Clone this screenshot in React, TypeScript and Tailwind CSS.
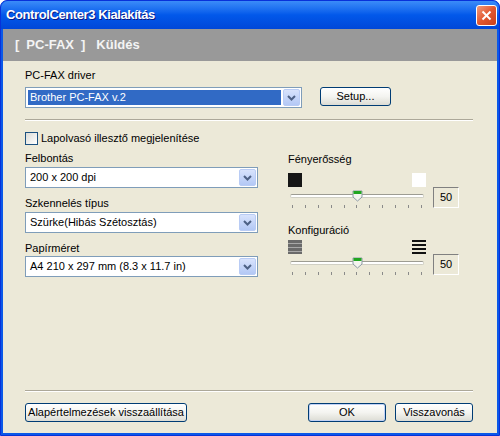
import React from "react";

const font = { fontFamily: '"Liberation Sans", "DejaVu Sans", sans-serif' };

function Combo({ value, width, selected }: { value: string; width: string; selected?: boolean }) {
  return (
    <div className={`${width} h-[21px] flex border border-[#7F9DB9] bg-white`}>
      <div className="flex-1 flex items-center p-[2px]">
        <div
          className={`w-full h-full flex items-center pl-[2px] text-[11px] whitespace-nowrap ${
            selected ? "bg-[#316AC5] text-white" : "text-black"
          }`}
        >
          {value}
        </div>
      </div>
      <div className="w-[17px] m-[1px] ml-0 rounded-[2px] border border-[#B9CCF5] bg-gradient-to-b from-[#D8E3FC] to-[#B3C8F5] flex items-center justify-center">
        <svg width="9" height="6" viewBox="0 0 9 6">
          <polyline points="1,1 4.5,4.5 8,1" fill="none" stroke="#4D6185" strokeWidth="2" />
        </svg>
      </div>
    </div>
  );
}

function XpButton({ label, width, isDefault }: { label: string; width: string; isDefault?: boolean }) {
  return (
    <div
      className={`${width} h-[19px] rounded-[3px] border border-[#003C74] bg-gradient-to-b from-[#FFFFFF] via-[#F4F4F0] to-[#DCDCD4] flex items-center justify-center text-[11px] text-black whitespace-nowrap ${
        isDefault ? "shadow-[inset_0_0_0_1px_#C2D2F5]" : ""
      }`}
    >
      {label}
    </div>
  );
}

function Thumb() {
  return (
    <svg width="11" height="12" viewBox="0 0 11 12">
      <path d="M1 1 H10 V7 L5.5 11 L1 7 Z" fill="#F4F4EE" stroke="#8C9AA5" strokeWidth="1" />
      <rect x="1.5" y="1" width="8" height="3" fill="#21A621" />
    </svg>
  );
}

function Slider({ top }: { top: React.ReactNode }) {
  return (
    <div className="flex items-end">
      <div className="w-[138px] flex flex-col">
        <div className="flex justify-between h-[14px]">{top}</div>
        <div className="relative h-[14px] mt-[2px]">
          <div className="absolute left-[2px] right-[2px] top-[5px] h-[4px] rounded-[2px] bg-white border border-[#D0CFC4] border-t-[#9D9C93]" />
          <div className="absolute left-[64px] top-[1px]">
            <Thumb />
          </div>
        </div>
        <div className="flex justify-between px-[4px] h-[6px] mt-[2px]">
          {Array.from({ length: 11 }).map((_, i) => (
            <div key={i} className="w-[1px] h-[3px] bg-[#8A8A8A]" />
          ))}
        </div>
      </div>
      <div className="ml-[7px] mb-[3px] w-[26px] h-[21px] border border-t-[#808080] border-l-[#808080] border-b-white border-r-white flex items-center justify-center text-[11px] text-black">
        50
      </div>
    </div>
  );
}

export default function App() {
  return (
    <div className="w-[500px] h-[436px] bg-white" style={font}>
      <div className="w-[500px] h-[436px] flex flex-col rounded-t-[7px] bg-[#0A58E8] border border-[#0831D9]">
        {/* Title bar */}
        <div className="h-[28px] flex items-center justify-between pl-[5px] pr-[2px] rounded-t-[7px] bg-gradient-to-b from-[#3B8CF8] via-[#0258EA] to-[#0047D8]">
          <span className="text-white text-[13px] font-bold [text-shadow:1px_1px_0_#0A1883] tracking-[-0.4px]">
            ControlCenter3 Kialakítás
          </span>
          <div className="w-[21px] h-[21px] rounded-[3px] border border-white bg-gradient-to-br from-[#F09A7A] via-[#E2572F] to-[#C9401B] flex items-center justify-center">
            <svg width="11" height="11" viewBox="0 0 11 11">
              <line x1="1.5" y1="1.5" x2="9.5" y2="9.5" stroke="white" strokeWidth="2" />
              <line x1="9.5" y1="1.5" x2="1.5" y2="9.5" stroke="white" strokeWidth="2" />
            </svg>
          </div>
        </div>
        {/* Client area */}
        <div className="flex-1 flex flex-col mx-[2px] mb-[2px] bg-[#ECE9D8]">
          <div className="h-[32px] bg-[#999999] flex items-center pl-[12px] text-[13px] font-bold text-[#F4F4F4]">
            <span>[</span>
            <span className="ml-[7px]">PC-FAX</span>
            <span className="ml-[7px]">]</span>
            <span className="ml-[11px]">Küldés</span>
          </div>
          <div className="flex-1 flex flex-col pl-[22px] pr-[24px] text-[11px] text-black">
            <div className="mt-[8px] h-[13px] leading-[13px]">PC-FAX driver</div>
            <div className="mt-[5px] flex items-start">
              <Combo value="Brother PC-FAX v.2" width="w-[277px]" selected />
              <div className="ml-[18px]">
                <XpButton label="Setup..." width="w-[71px]" />
              </div>
            </div>
            <div className="mt-[11px] h-[2px] border-t border-[#ACA899] border-b border-b-white" />
            <div className="mt-[11px] flex items-center h-[13px]">
              <div className="w-[13px] h-[13px] border border-[#1C5180] bg-gradient-to-br from-[#DCDCD7] to-[#FFFFFF]" />
              <span className="ml-[3px]">Lapolvasó illesztő megjelenítése</span>
            </div>
            <div className="flex mt-[6px]">
              <div className="w-[233px] flex flex-col">
                <div className="h-[13px] leading-[13px] mt-[1px]">Felbontás</div>
                <div className="mt-[2px]">
                  <Combo value="200 x 200 dpi" width="w-[233px]" />
                </div>
                <div className="h-[13px] leading-[13px] mt-[9px]">Szkennelés típus</div>
                <div className="mt-[2px]">
                  <Combo value="Szürke(Hibás Szétosztás)" width="w-[233px]" />
                </div>
                <div className="h-[13px] leading-[13px] mt-[9px]">Papírméret</div>
                <div className="mt-[1px]">
                  <Combo value="A4 210 x 297 mm (8.3 x 11.7 in)" width="w-[233px]" />
                </div>
              </div>
              <div className="ml-[30px] flex flex-col">
                <div className="h-[13px] leading-[13px] mt-[2px]">Fényerősség</div>
                <div className="mt-[7px]">
                  <Slider
                    top={
                      <>
                        <div className="w-[14px] h-[14px] bg-[#161616]" />
                        <div className="w-[14px] h-[14px] bg-white" />
                      </>
                    }
                  />
                </div>
                <div className="h-[13px] leading-[13px] mt-[13px]">Konfiguráció</div>
                <div className="mt-[3px]">
                  <Slider
                    top={
                      <>
                        <div className="w-[14px] h-[14px] bg-[#6A6A6A] flex flex-col justify-around py-[1px]">
                          <div className="h-[1px] bg-[#A8A8A8]" />
                          <div className="h-[1px] bg-[#A8A8A8]" />
                          <div className="h-[1px] bg-[#A8A8A8]" />
                        </div>
                        <div className="w-[14px] h-[14px] flex flex-col justify-between">
                          <div className="h-[2px] bg-[#111]" />
                          <div className="h-[2px] bg-[#111]" />
                          <div className="h-[2px] bg-[#111]" />
                          <div className="h-[2px] bg-[#111]" />
                        </div>
                      </>
                    }
                  />
                </div>
              </div>
            </div>
            <div className="flex-1" />
            <div className="h-[2px] border-t border-[#ACA899] border-b border-b-white" />
            <div className="mt-[11px] mb-[11px] flex items-center">
              <XpButton label="Alapértelmezések visszaállítása" width="w-[162px]" />
              <div className="flex-1" />
              <XpButton label="OK" width="w-[78px]" isDefault />
              <div className="ml-[9px]">
                <XpButton label="Visszavonás" width="w-[78px]" />
              </div>
            </div>
          </div>
        </div>
      </div>
    </div>
  );
}
